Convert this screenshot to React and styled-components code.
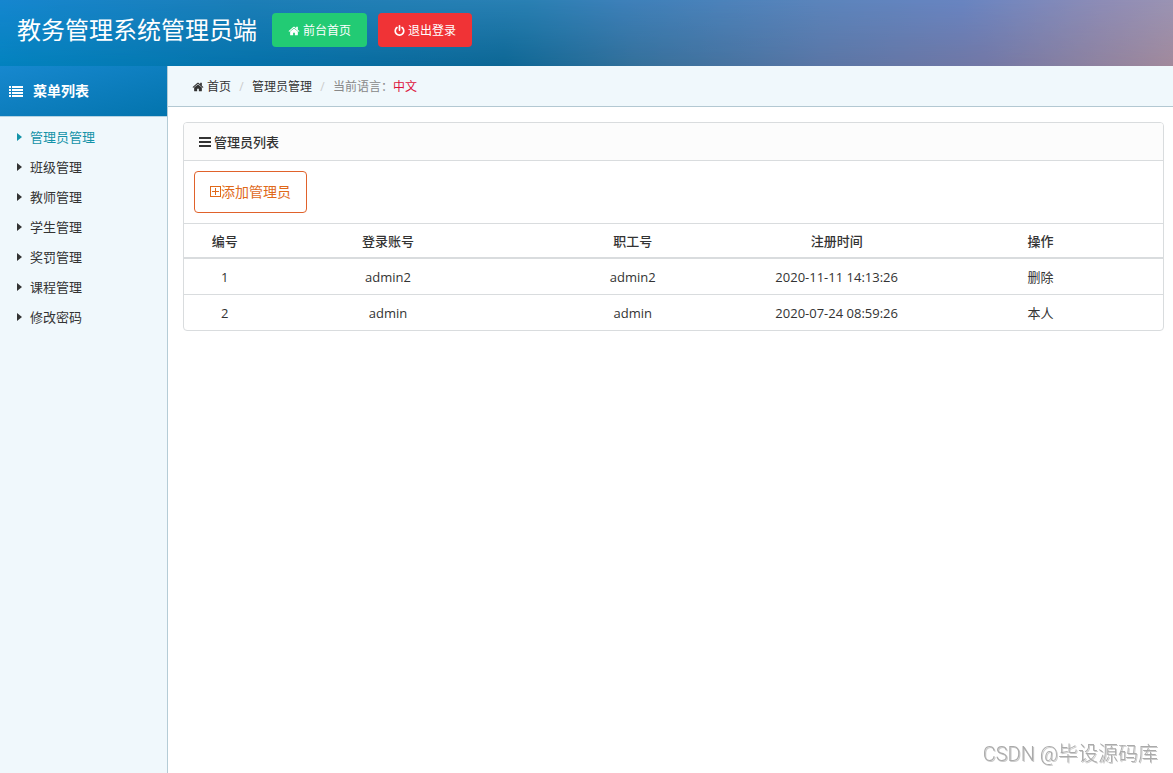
import React from "react";
import styled, { createGlobalStyle, css } from "styled-components";

const GlobalStyle = createGlobalStyle`
  *, *::before, *::after { box-sizing: border-box; }
  body {
    margin: 0;
    background: #fff;
    color: #333;
    font: 13px/20px "Open Sans", "Noto Sans CJK SC", sans-serif;
  }
  a { color: inherit; text-decoration: none; }
`;

const Page = styled.div`
  display: flex;
  flex-direction: column;
  min-height: 100vh;
`;

const Header = styled.header`
  position: relative;
  isolation: isolate;
  display: flex;
  align-items: flex-start;
  height: 66px;
  padding: 13px 17px;
  color: #fff;
  background: linear-gradient(90deg, #0383bf 0%, #0572aa 22%, #0d6795 43%, #34709b 54%, #5a76a6 70%, #7378a6 84%, #a28a9c 100%);

  &::before {
    content: "";
    position: absolute;
    inset: 0;
    z-index: -1;
    background: linear-gradient(90deg, #1586cf 0%, #1c7eb7 21%, #2a80b3 45%, #3d80b9 53%, #5b84bb 70%, #6884c1 82%, #8d8cb6 94%, #9a93b3 100%);
    mask-image: linear-gradient(#000, transparent);
  }
`;

const Title = styled.h1`
  margin: 0 15px 0 0;
  font-size: 24px;
  line-height: 34px;
  font-weight: 400;
`;

const Actions = styled.div`
  display: flex;
  gap: 11px;
`;

const ActionButton = styled.button`
  display: flex;
  align-items: center;
  gap: 3px;
  height: 34px;
  padding: 1px 16px 0;
  border: 0;
  border-radius: 4px;
  color: #fff;
  background: ${(p) => (p.$danger ? "#f03336" : "#22cb74")};
  font: inherit;
  font-size: 12px;
  cursor: pointer;
`;

const Body = styled.div`
  display: flex;
  flex: 1;
`;

const Sidebar = styled.aside`
  flex: 0 0 168px;
  border-right: 1px solid #b5ccd6;
  background: #f0f8fc;
`;

const SidebarTitle = styled.h2`
  display: flex;
  align-items: center;
  gap: 10px;
  height: 50px;
  margin: 0;
  padding: 0 9px;
  color: #fff;
  background: linear-gradient(165deg, #1788cf, #0374ad);
  font-size: 14px;
  font-weight: 700;
`;

const Menu = styled.ul`
  margin: 0;
  padding: 5px 0;
  list-style: none;
  border-top: 1px solid #b5d3e2;
`;

const MenuLink = styled.a`
  display: flex;
  align-items: center;
  gap: 8px;
  height: 30px;
  padding: 0 17px;
  ${(p) =>
    p.$active &&
    css`
      color: #1393a8;
    `}

  &::before {
    content: "";
    border: solid transparent;
    border-width: 4px 0 4px 5px;
    border-left-color: currentColor;
  }
`;

const Main = styled.main`
  flex: 1;
  min-width: 0;
`;

const Breadcrumb = styled.nav`
  display: flex;
  align-items: center;
  height: 41px;
  padding: 2px 24px 0;
  border-bottom: 1px solid #b3c8d2;
  background: #f0f8fc;
  font-size: 12px;
`;

const Crumb = styled.a`
  display: flex;
  align-items: center;
  gap: 3px;
`;

const Divider = styled.span`
  width: 21px;
  text-align: center;
  color: #ccc;
`;

const Language = styled.span`
  color: #888;
  strong {
    color: #dc143c;
    font-weight: 400;
  }
`;

const Panel = styled.section`
  margin: 15px 9px 15px 15px;
  border: 1px solid #d9dcde;
  border-radius: 4px;
  overflow: hidden;
`;

const PanelTitle = styled.h3`
  display: flex;
  align-items: center;
  gap: 3px;
  height: 38px;
  margin: 0;
  padding: 0 15px;
  border-bottom: 1px solid #d9dcde;
  background: #fcfcfc;
  font-size: 13px;
  font-weight: 500;
`;

const Toolbar = styled.div`
  padding: 10px;
`;

const AddButton = styled.button`
  display: flex;
  align-items: center;
  height: 42px;
  padding: 0 15px;
  border: 1px solid #e0622b;
  border-radius: 4px;
  color: #e0691a;
  background: #fff;
  font: inherit;
  font-size: 14px;
  cursor: pointer;
`;

const Table = styled.table`
  width: 100%;
  table-layout: fixed;
  border-collapse: separate;
  border-spacing: 0;
  text-align: center;
`;

const HeadCell = styled.th`
  width: ${(p) => p.$share}%;
  height: 36px;
  padding: 0;
  border-top: 1px solid #d9dcde;
  border-bottom: 2px solid #d9dcde;
  font-weight: 500;
`;

const Cell = styled.td`
  box-sizing: content-box;
  height: 35px;
  padding: 0;
  tr + tr > & {
    border-top: 1px solid #d9dcde;
  }
`;

const Watermark = styled.div`
  position: fixed;
  right: 15px;
  bottom: 5px;
  color: #aaa;
  font: 20px/28px Roboto, "Noto Sans CJK SC", sans-serif;
  font-weight: 300;
  text-shadow: 1px 1px 0 #ccc;
`;

const Glyph = styled.svg`
  flex: none;
  fill: currentColor;
`;

const HomeIcon = ({ size = 13 }) => (
  <Glyph width={size} height={size} viewBox="0 0 1792 1792" aria-hidden="true">
    <path d="M1472 992v480q0 26-19 45t-45 19h-384v-384h-256v384h-384q-26 0-45-19t-19-45v-480q0-1 .5-3t.5-3l575-474 575 474q1 2 1 6zm223-69l-62 74q-8 9-21 11h-3q-13 0-21-7l-692-577-692 577q-12 8-24 7-13-2-21-11l-62-74q-8-10-7-23.5t11-21.5l719-599q32-26 76-26t76 26l244 204v-195q0-14 9-23t23-9h192q14 0 23 9t9 23v408l219 182q10 8 11 21.5t-7 23.5z" />
  </Glyph>
);

const PowerIcon = () => (
  <Glyph width="11" height="11" viewBox="64 0 1664 1664" aria-hidden="true">
    <path d="M1664 896q0 156-61 298t-164 245-245 164-298 61-298-61-245-164-164-245-61-298q0-182 80.5-343t226.5-270q43-32 95.5-25t83.5 50q32 42 24.5 94.5t-49.5 84.5q-98 74-151.5 181t-53.5 228q0 104 40.5 198.5t109.5 163.5 163.5 109.5 198.5 40.5 198.5-40.5 163.5-109.5 109.5-163.5 40.5-198.5q0-121-53.5-228t-151.5-181q-42-32-49.5-84.5t24.5-94.5q31-43 84-50t95 25q146 109 226.5 270t80.5 343zm-640-768v640q0 52-38 90t-90 38-90-38-38-90v-640q0-52 38-90t90-38 90 38 38 90z" />
  </Glyph>
);

const ListIcon = () => (
  <Glyph width="14" height="11" viewBox="0 0 14 11" aria-hidden="true">
    <path d="M0 0h2v2H0zM3 0h11v2H3zM0 3h2v2H0zM3 3h11v2H3zM0 6h2v2H0zM3 6h11v2H3zM0 9h2v2H0zM3 9h11v2H3z" />
  </Glyph>
);

const BarsIcon = () => (
  <Glyph width="12" height="10" viewBox="0 0 12 10" aria-hidden="true">
    <path d="M0 0h12v2H0zM0 4h12v2H0zM0 8h12v2H0z" />
  </Glyph>
);

const PlusSquareIcon = () => (
  <Glyph width="11" height="12" viewBox="0 0 11 12" aria-hidden="true">
    <path d="M0 0h11v11H0zM1 1v9h9V1z" fillRule="evenodd" />
    <path d="M5 2h1v7H5zM2 5h7v1H2z" />
  </Glyph>
);

const menu = ["管理员管理", "班级管理", "教师管理", "学生管理", "奖罚管理", "课程管理", "修改密码"];

const columns = [
  ["编号", 8.333],
  ["登录账号", 25],
  ["职工号", 25],
  ["注册时间", 16.667],
  ["操作", 25],
];

const admins = [
  { id: 1, account: "admin2", staff: "admin2", created: "2020-11-11 14:13:26", self: false },
  { id: 2, account: "admin", staff: "admin", created: "2020-07-24 08:59:26", self: true },
];

export default function App() {
  return (
    <Page>
      <GlobalStyle />
      <Header>
        <Title>教务管理系统管理员端</Title>
        <Actions>
          <ActionButton type="button"><HomeIcon size={12} />前台首页</ActionButton>
          <ActionButton type="button" $danger><PowerIcon />退出登录</ActionButton>
        </Actions>
      </Header>
      <Body>
        <Sidebar>
          <SidebarTitle><ListIcon />菜单列表</SidebarTitle>
          <nav aria-label="菜单列表">
            <Menu>
              {menu.map((label, i) => (
                <li key={label}>
                  <MenuLink href="#" $active={i === 0}>{label}</MenuLink>
                </li>
              ))}
            </Menu>
          </nav>
        </Sidebar>
        <Main>
          <Breadcrumb>
            <Crumb href="#"><HomeIcon size={12} />首页</Crumb>
            <Divider>/</Divider>
            <Crumb href="#">管理员管理</Crumb>
            <Divider>/</Divider>
            <Language>当前语言：<strong>中文</strong></Language>
          </Breadcrumb>
          <Panel>
            <PanelTitle><BarsIcon />管理员列表</PanelTitle>
            <Toolbar>
              <AddButton type="button"><PlusSquareIcon />添加管理员</AddButton>
            </Toolbar>
            <Table>
              <thead>
                <tr>
                  {columns.map(([label, share]) => (
                    <HeadCell key={label} scope="col" $share={share}>{label}</HeadCell>
                  ))}
                </tr>
              </thead>
              <tbody>
                {admins.map((a) => (
                  <tr key={a.id}>
                    <Cell>{a.id}</Cell>
                    <Cell>{a.account}</Cell>
                    <Cell>{a.staff}</Cell>
                    <Cell>{a.created}</Cell>
                    <Cell>{a.self ? "本人" : <a href="#">删除</a>}</Cell>
                  </tr>
                ))}
              </tbody>
            </Table>
          </Panel>
        </Main>
      </Body>
      <Watermark>CSDN @毕设源码库</Watermark>
    </Page>
  );
}
